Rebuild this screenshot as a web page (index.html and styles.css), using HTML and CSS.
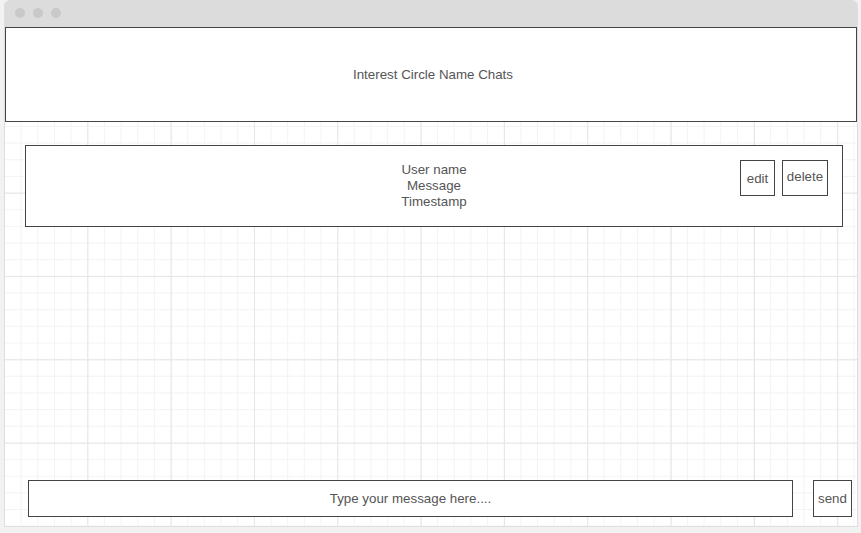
FILE: index.html
```html
<!DOCTYPE html>
<html>
<head>
<meta charset="utf-8">
<link rel="stylesheet" href="styles.css">
</head>
<body>
<div class="window">
  <div class="titlebar">
    <span class="dot"></span><span class="dot"></span><span class="dot"></span>
  </div>
  <div class="header">Interest Circle Name Chats</div>
  <div class="canvas">
    <div class="message">
      <div class="msg-text">User name<br>Message<br>Timestamp</div>
      <div class="actions">
        <div class="btn btn-edit">edit</div>
        <div class="btn btn-delete">delete</div>
      </div>
    </div>
    <div class="composer">
      <div class="input">Type your message here....</div>
      <div class="btn btn-send">send</div>
    </div>
  </div>
</div>
</body>
</html>
```

FILE: styles.css
```css
html, body {
  margin: 0;
  padding: 0;
}
body {
  width: 861px;
  height: 533px;
  background: #f2f2f2;
  font-family: "Liberation Sans", Arial, sans-serif;
  font-size: 13.33px;
  color: #555;
  overflow: hidden;
}
.window {
  box-sizing: border-box;
  margin-left: 4px;
  width: 854px;
  height: 527px;
  border: 1px solid #dedede;
  border-top: none;
  border-radius: 5px 5px 0 0;
  display: flex;
  flex-direction: column;
  background-color: #fff;
  background-image:
    linear-gradient(#e6e6e6 1px, transparent 1px),
    linear-gradient(90deg, #e6e6e6 1px, transparent 1px),
    linear-gradient(#f3f3f3 1px, transparent 1px),
    linear-gradient(90deg, #f3f3f3 1px, transparent 1px);
  background-size: 83.333px 83.333px, 83.333px 83.333px, 16.667px 16.667px, 16.667px 16.667px;
  background-origin: border-box;
  background-position: 0 26px, 0 26px, 0 26px, 0 26px;
}
.titlebar {
  height: 27px;
  flex: none;
  box-sizing: border-box;
  background: #dcdcdc;
  border-radius: 5px 5px 0 0;
  display: flex;
  gap: 8px;
  padding: 8px 0 0 10px;
}
.dot {
  width: 10px;
  height: 10px;
  border-radius: 50%;
  background: #c9c9c9;
}
.header {
  flex: none;
  box-sizing: border-box;
  height: 95px;
  border: 1px solid #444;
  background: #fff;
  display: flex;
  align-items: center;
  justify-content: center;
  padding-left: 4px;
}
.canvas {
  flex: 1;
  display: flex;
  flex-direction: column;
  justify-content: space-between;
}
.message {
  box-sizing: border-box;
  margin: 23px 14px 0 20px;
  height: 82px;
  border: 1px solid #444;
  background: #fff;
  display: grid;
  grid-template-columns: 1fr auto 1fr;
  padding-top: 14px;
}
.msg-text {
  grid-column: 2;
  text-align: center;
  line-height: 16px;
  align-self: start;
  padding-top: 2px;
}
.actions {
  grid-column: 3;
  justify-self: end;
  align-self: start;
  display: flex;
  gap: 7px;
  margin-right: 14px;
}
.btn {
  box-sizing: border-box;
  border: 1px solid #444;
  background: #fff;
  display: flex;
  align-items: center;
  justify-content: center;
}
.btn-edit {
  width: 35px;
  height: 36px;
}
.btn-delete {
  width: 46px;
  height: 36px;
  padding-bottom: 3px;
}
.composer {
  display: flex;
  gap: 20px;
  margin: 0 4px 9px 23px;
}
.input {
  box-sizing: border-box;
  width: 765px;
  height: 37px;
  border: 1px solid #444;
  background: #fff;
  display: flex;
  align-items: center;
  justify-content: center;
}
.btn-send {
  width: 39px;
  height: 37px;
}
```
